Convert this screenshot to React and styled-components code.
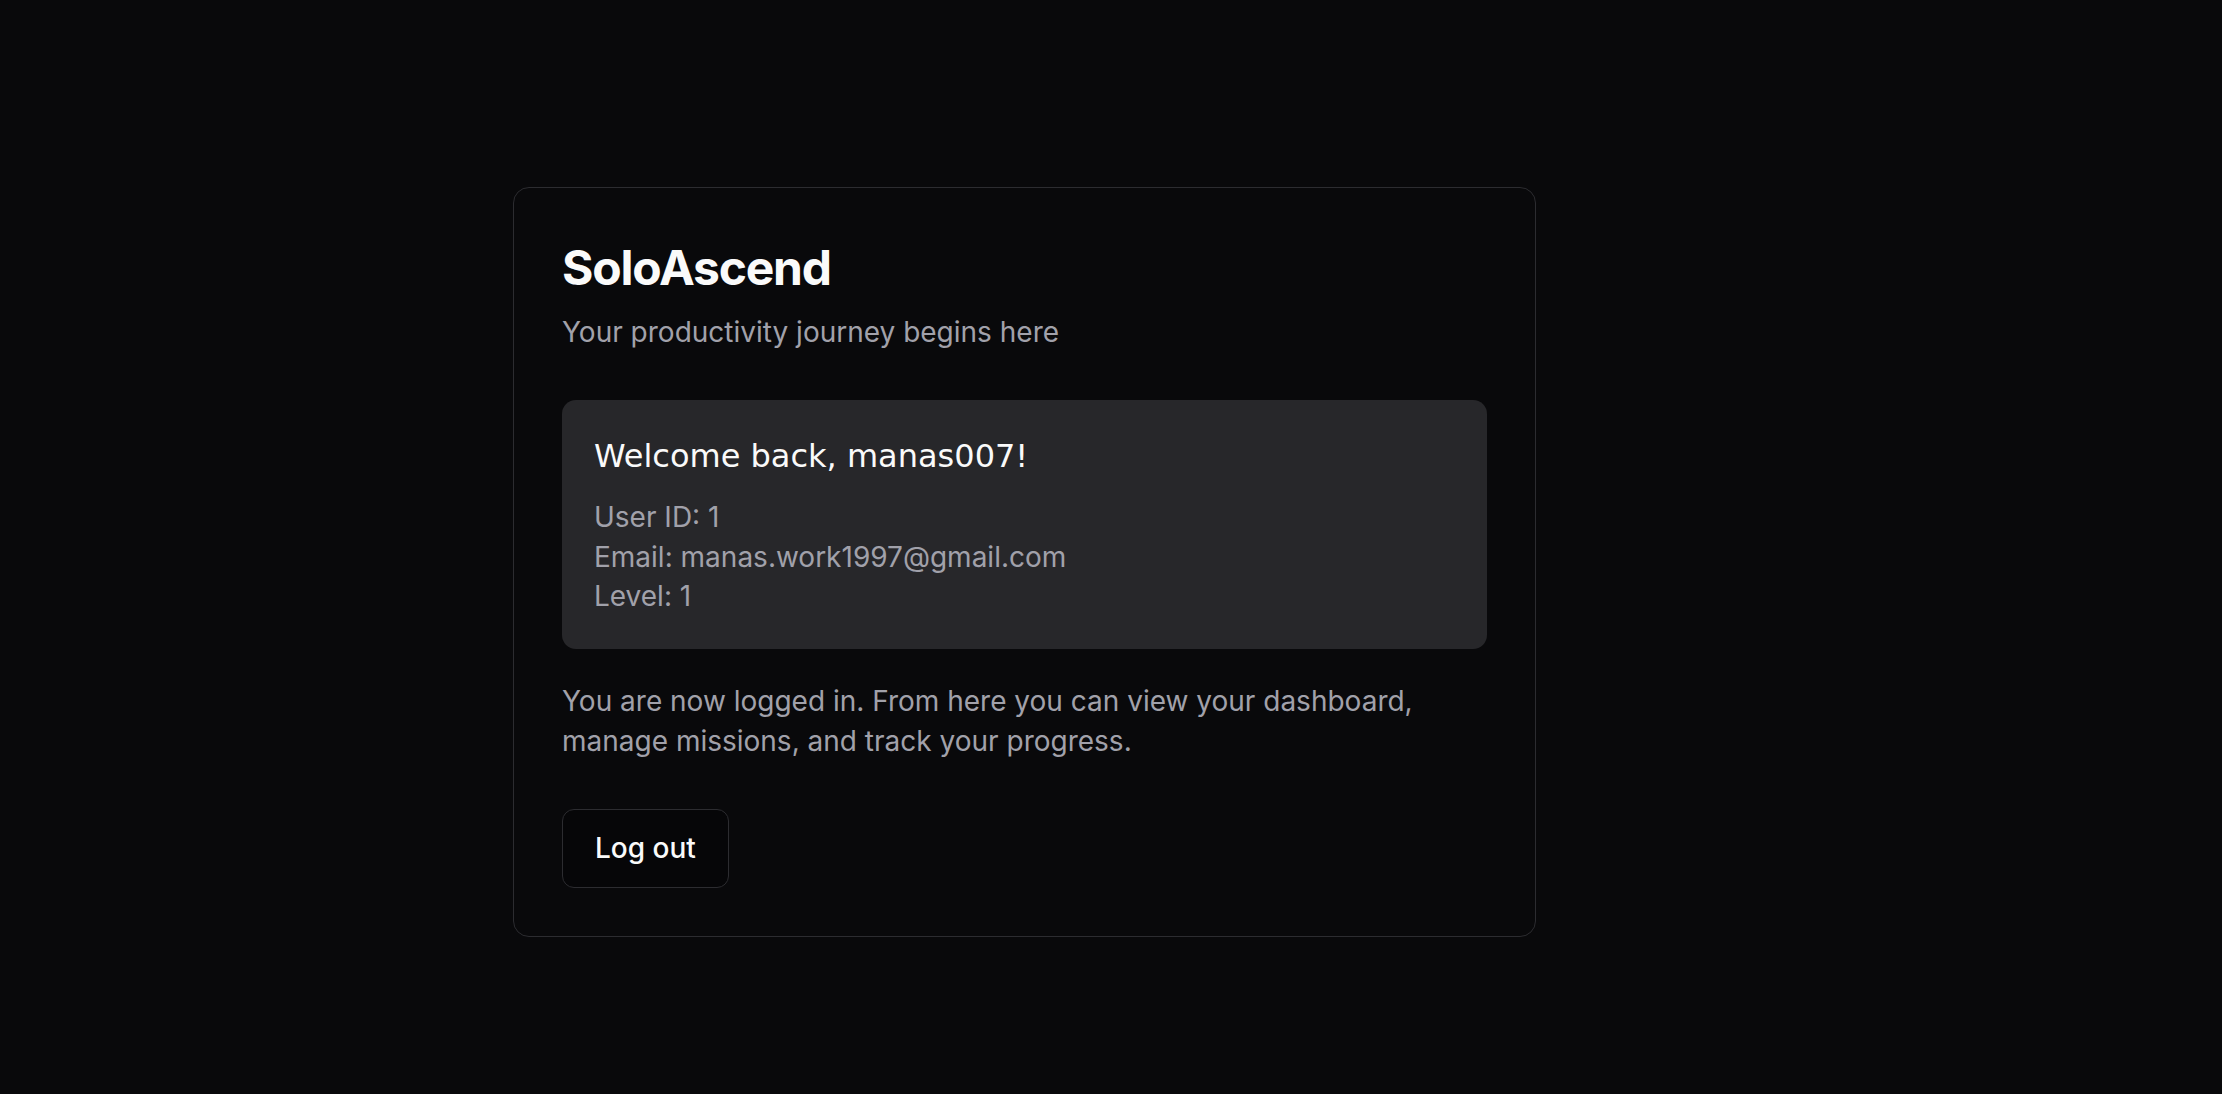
import React from "react";
import styled, { createGlobalStyle } from "styled-components";

const GlobalStyle = createGlobalStyle`
  html, body {
    margin: 0;
    padding: 0;
    background-color: #09090b;
  }
  body {
    font-family: Inter, "Liberation Sans", sans-serif;
    color: #fafafa;
  }
`;

const Page = styled.div`
  min-height: 1094px;
  padding-top: 187px;
  box-sizing: border-box;
`;

const Wrapper = styled.div`
  width: 1196px;
  margin: 0 auto;
`;

const Card = styled.div`
  width: 1023px;
  box-sizing: border-box;
  padding: 48px;
  border: 1px solid #2c2c30;
  border-radius: 16px;
  background-color: #09090b;
`;

const Title = styled.h1`
  margin: 0;
  padding-top: 3px;
  font-size: 48px;
  line-height: 57px;
  font-weight: 700;
  letter-spacing: -0.025em;
  color: #fafafa;
`;

const Subtitle = styled.p`
  margin: 17px 0 0;
  font-size: 28px;
  line-height: 39px;
  color: #a1a1aa;
`;

const UserBox = styled.div`
  margin-top: 48px;
  padding: 32px;
  border-radius: 14px;
  background-color: #27272a;
`;

const Welcome = styled.h2`
  margin: 0 0 17px;
  font-family: "DejaVu Sans", "Open Sans", sans-serif;
  font-size: 32px;
  line-height: 49px;
  font-weight: 400;
  color: #fafafa;
`;

const InfoLine = styled.div`
  font-size: 28px;
  line-height: 39.5px;
  color: #a1a1aa;
`;

const Text = styled.p`
  margin: 32px 0 0;
  font-size: 28px;
  line-height: 40px;
  color: #a1a1aa;
`;

const Button = styled.button`
  margin-top: 48px;
  height: 79px;
  padding: 0 32px;
  border: 1px solid #2c2c30;
  border-radius: 12px;
  background-color: #060608;
  color: #fafafa;
  font-family: Inter, "Liberation Sans", sans-serif;
  font-size: 28px;
  font-weight: 500;
  cursor: pointer;
`;

const App = () => {
  return (
    <>
      <GlobalStyle />
      <Page>
        <Wrapper>
          <Card>
            <Title>SoloAscend</Title>
            <Subtitle>Your productivity journey begins here</Subtitle>
            <UserBox>
              <Welcome>Welcome back, manas007!</Welcome>
              <InfoLine>User ID: 1</InfoLine>
              <InfoLine>Email: manas.work1997@gmail.com</InfoLine>
              <InfoLine>Level: 1</InfoLine>
            </UserBox>
            <Text>
              You are now logged in. From here you can view your dashboard,
              <br />
              manage missions, and track your progress.
            </Text>
            <Button>Log out</Button>
          </Card>
        </Wrapper>
      </Page>
    </>
  );
};

export default App;
